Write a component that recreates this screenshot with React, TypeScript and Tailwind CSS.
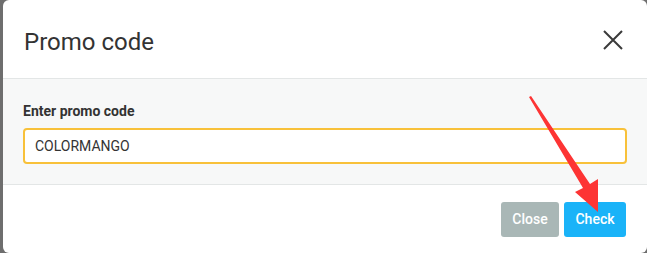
export default function App() {
  return (
    <div className="relative h-[253px] w-[647px] overflow-hidden bg-[#6e6e6e] pl-[3px] font-['Roboto',sans-serif]">
      <div className="flex h-[253px] flex-col overflow-hidden rounded-[6px] bg-white">
        <header className="flex h-[79px] shrink-0 items-center justify-between border-b border-[#e3e6e6] pl-[21px] pr-[24px] pt-[5px]">
          <h1 className="text-[24px] leading-none text-[#333]">Promo code</h1>
          <button className="mb-[3px] text-[#3a3a3a]" aria-label="Close">
            <svg viewBox="0 0 20 20" className="h-[20px] w-[20px]" fill="none" stroke="currentColor" strokeWidth="2">
              <path d="M1 1L19 19M19 1L1 19" />
            </svg>
          </button>
        </header>

        <section className="h-[106px] shrink-0 border-b border-[#e3e6e6] bg-[#f7f8f8] px-[20px] pt-[24px]">
          <label className="block text-[14px] font-bold leading-[17px] text-[#333]">Enter promo code</label>
          <div className="mt-[8px] flex h-[36px] items-center rounded-[4px] border-2 border-[#f8c13a] bg-white px-[10px] text-[14px] text-[#333]">
            COLORMANGO
          </div>
        </section>

        <footer className="flex justify-end gap-[5px] pr-[21px] pt-[17px]">
          <button className="h-[35px] w-[58px] rounded-[3px] bg-[#a9b7b6] text-[14px] font-medium text-white">
            Close
          </button>
          <button className="h-[35px] w-[62px] rounded-[3px] bg-[#1ab3f8] text-[14px] font-medium text-white">
            Check
          </button>
        </footer>
      </div>

      <svg className="pointer-events-none absolute left-0 top-0" width="647" height="253" viewBox="0 0 647 253">
        <polygon points="529,97 531,96 590,184 598,179 598,212 575,192 583,188" fill="#fd3434" />
      </svg>
    </div>
  )
}
